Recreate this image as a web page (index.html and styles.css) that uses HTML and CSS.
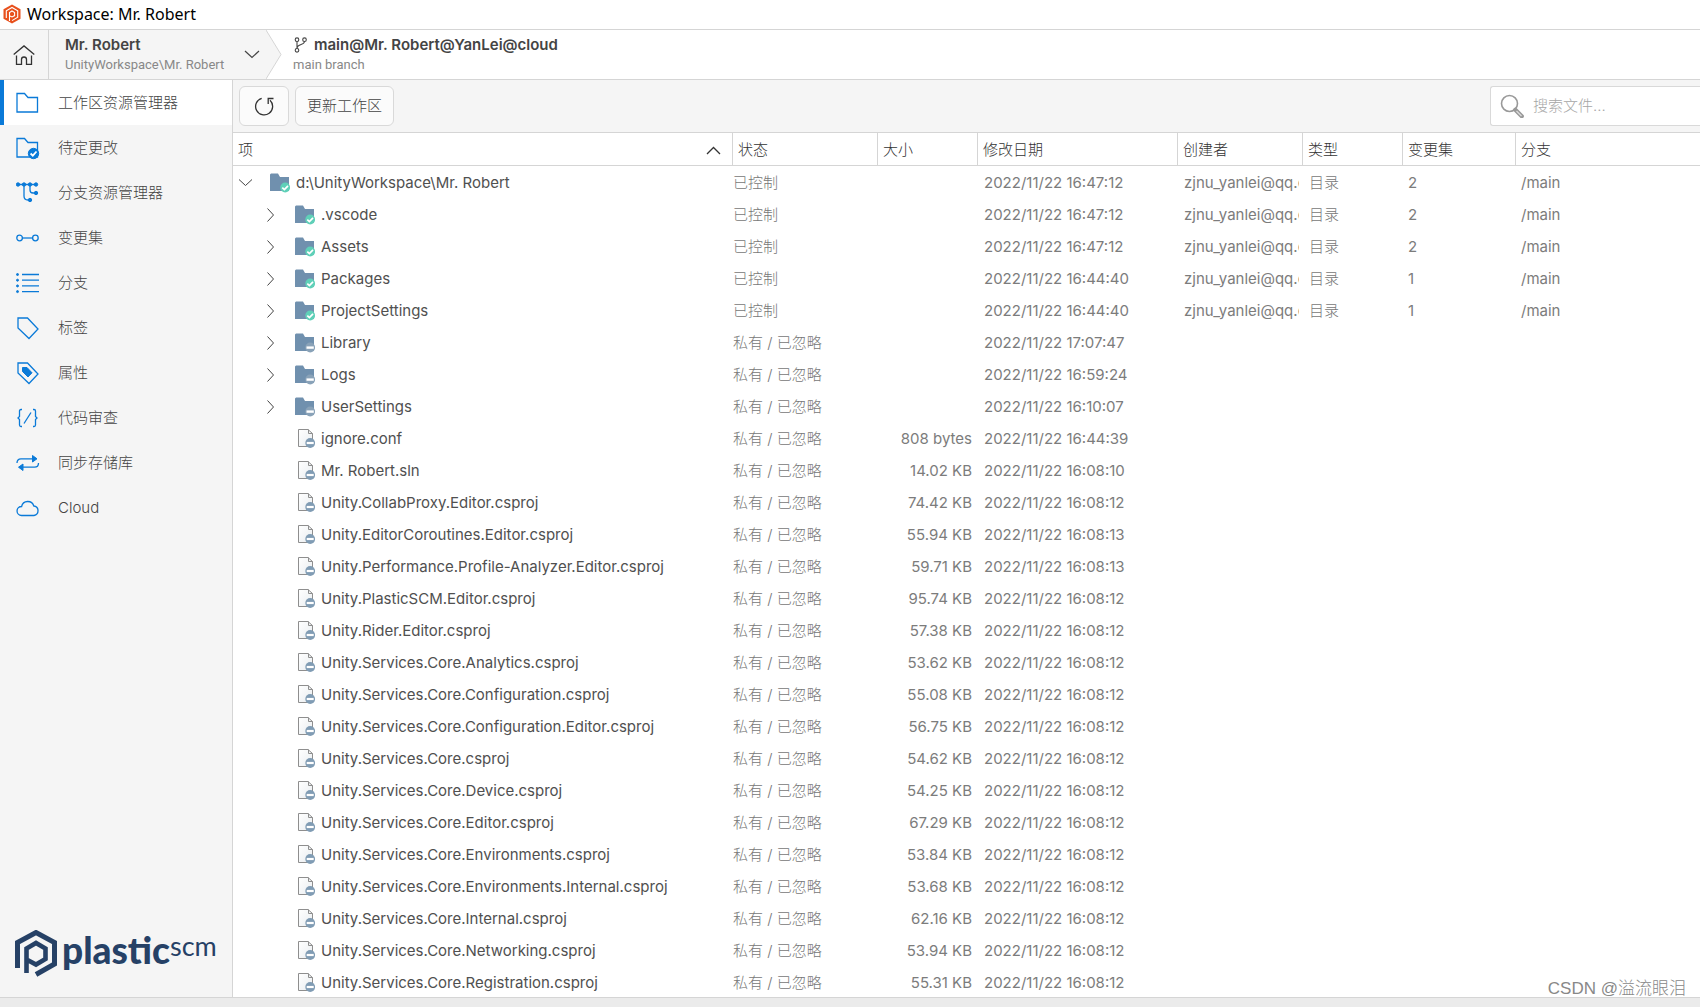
FILE: index.html
```html
<!DOCTYPE html>
<html lang="zh-CN">
<head>
<meta charset="utf-8">
<title>Workspace: Mr. Robert</title>
<link rel="stylesheet" href="styles.css">
</head>
<body>
<svg class="sprite" aria-hidden="true">
  <linearGradient id="paper" x1="0" y1="0" x2="1" y2="1"><stop offset="0" stop-color="#fff"/><stop offset="1" stop-color="#e9edf0"/></linearGradient>
  <symbol id="folder" viewBox="0 0 20 20"><path d="M0 1.5 1 .5H8L10 4H19V18H0Z" fill="#7090ae"/></symbol>
  <symbol id="folder-ok" viewBox="0 0 20 20"><use href="#folder"/><circle cx="15.2" cy="14.5" r="4.9" fill="#5fd0b8"/><path d="M12.3 14.6 14.4 16.6 18 12.8" fill="none" stroke="#fff" stroke-width="1.7"/></symbol>
  <symbol id="folder-ign" viewBox="0 0 20 20"><use href="#folder"/><circle cx="15.2" cy="14.5" r="4.9" fill="#89a2b8"/><path d="M11.5 14.6H18.8" stroke="#fff" stroke-width="2.4"/></symbol>
  <symbol id="file" viewBox="0 0 20 20"><path d="M3.5 .5H13L17.5 4.500V17.500H3.500Z" fill="url(#paper)" stroke="#8e8e8e"/><path d="M13.500 .5V4.500H17.500" fill="none" stroke="#8e8e8e"/><circle cx="15.200" cy="14" r="4.900" fill="#809cb4"/><path d="M11.700 14H18.700" stroke="#fff" stroke-width="2.200"/></symbol>
  <symbol id="right" viewBox="0 0 13 14"><path d="M3.5 .5 9.5 7 3.5 13.5" fill="none" stroke="#444"/></symbol>
  <symbol id="down" viewBox="0 0 13 14"><path d="M0 3.500 6.500 9.500 13 3.500" fill="none" stroke="#444"/></symbol>
</svg>

<header class="titlebar">
  <svg class="app-icon" viewBox="0 0 18 20"><path d="M9 .5 17.500 5.300V14.700L9 19.500 .5 14.700V5.300Z" fill="#e8501c"/><path d="M3.300 14V6.700L9 3.400 14.700 6.700V13.200L9 16.600" fill="none" stroke="#fff" stroke-width="1.100"/><path d="M6.500 17V8.600L9 7 11.600 8.500V11.600L9 13 7 12" fill="none" stroke="#fff" stroke-width="1.100"/></svg>
  <span>Workspace: Mr. Robert</span>
</header>

<div class="crumbs">
  <button class="home" aria-label="Home"><svg viewBox="0 0 22 20" width="22" height="20"><path d="M.7 9.500 11 .9 21.300 9.500M3.500 10.500V19.300H8.500V14.500A2.500 2.500 0 0 1 13.500 14.500V19.300H18.500V10.500" fill="none" stroke="#333" stroke-width="1.300"/></svg></button>
  <button class="workspace">
    <span class="crumb-text"><strong>Mr. Robert</strong><small>UnityWorkspace\Mr. Robert</small></span>
    <svg viewBox="0 0 16 9" width="16" height="9"><path d="M1 1 8 7.500 15 1" fill="none" stroke="#444" stroke-width="1.200"/></svg>
  </button>
  <svg class="arrow" viewBox="0 0 16 49" width="16" height="49"><path d="M0 0 15 24.500 0 49" fill="#f5f5f5" stroke="#d5d5d5"/></svg>
  <div class="crumb-text branch">
    <strong><svg viewBox="0 0 14 16" width="14" height="16"><g fill="none" stroke="#444" stroke-width="1.100"><circle cx="4" cy="2.700" r="1.800"/><circle cx="11.500" cy="2.700" r="1.800"/><circle cx="4" cy="13.300" r="1.800"/><path d="M4 4.500V11.500M11.500 4.500C11.300 8.500 4.800 6.500 4 11"/></g></svg>main@Mr. Robert@YanLei@cloud</strong>
    <small>main branch</small>
  </div>
</div>

<div class="body">
  <aside class="side">
    <nav>
      <a class="active" href="#"><svg viewBox="0 0 24 24"><path d="M1 3V21H21.500V6.500H12L8.500 2.500H1Z"/></svg>工作区资源管理器</a>
      <a href="#"><svg viewBox="0 0 24 24"><path d="M1 3V21H21.500V6.500H12L8.500 2.500H1Z"/><circle class="solid" cx="17.500" cy="17.500" r="5.200"/><path class="tick" d="M14.600 17.500 16.800 19.600 20.500 15.500"/></svg>待定更改</a>
      <a href="#"><svg viewBox="0 0 24 24"><path d="M2 3.500H20M8 3.500V15Q8 19 12 19H14M14 3.500V9Q14 12 17 12H20"/><g class="solid"><circle cx="2" cy="3.500" r="1.700"/><circle cx="8" cy="3.500" r="1.700"/><circle cx="14" cy="3.500" r="1.700"/><circle cx="20" cy="3.500" r="1.700"/><circle cx="20" cy="12" r="1.700"/><circle cx="14" cy="19" r="1.700"/></g></svg>分支资源管理器</a>
      <a href="#"><svg viewBox="0 0 24 24"><circle cx="3.600" cy="12" r="2.800"/><circle cx="19.400" cy="12" r="2.800"/><path d="M6.400 12H16.600"/></svg>变更集</a>
      <a href="#"><svg viewBox="0 0 24 24"><path d="M6 3.500H23M6 9.200H23M6 14.900H23M6 20.600H23"/><g class="solid"><circle cx="1.500" cy="3.500" r="1"/><circle cx="1.500" cy="9.200" r="1"/><circle cx="1.500" cy="14.900" r="1"/><circle cx="1.500" cy="20.600" r="1"/></g></svg>分支</a>
      <a href="#"><svg viewBox="0 0 24 24"><path d="M2 2H11.500L22 13 13 22.500 2 12Z"/></svg>标签</a>
      <a href="#"><svg viewBox="0 0 24 24"><path d="M2 2H11.500L22 13 13 22.500 2 12Z"/><path class="solid" d="M6.500 6.500H11L16 11.800 12 16 6.500 10.500Z"/></svg>属性</a>
      <a href="#"><svg viewBox="0 0 24 24"><path d="M6 3.500H5Q3.500 3.500 3.500 5V10.500L2 12 3.500 13.500V19Q3.500 20.500 5 20.500H6M17 3.500H18Q19.500 3.500 19.500 5V10.500L21 12 19.500 13.500V19Q19.500 20.500 18 20.500H17M15 6.500 8 17.500"/></svg>代码审查</a>
      <a href="#"><svg viewBox="0 0 24 24"><path d="M1 12Q1 7.800 5 7.800H18M22.500 12Q22.500 16.200 18.500 16.200H5"/><path class="solid" d="M16.500 4.500 21 7.800 16.500 11ZM7 13 2.500 16.200 7 19.500Z"/></svg>同步存储库</a>
      <a href="#"><svg viewBox="0 0 24 24"><path d="M5.500 19.500A4.400 4.400 0 0 1 5.600 10.500 6.300 6.300 0 0 1 17.800 10 4.800 4.800 0 0 1 18 19.500Z"/></svg>Cloud</a>
    </nav>
    <div class="logo"><svg viewBox="0 0 42 47" width="42" height="47"><path d="M2.500 38V12.500L21 2.500 39.500 12.500V34L21 44.500" fill="none" stroke="currentColor" stroke-width="5"/><path d="M11.500 43V18.500L21 13 30.500 18.500V29L21 34.500 12.500 30" fill="none" stroke="currentColor" stroke-width="4.600"/></svg><span class="word">plastic</span><span class="scm">scm</span></div>
  </aside>

  <main>
    <div class="toolbar">
      <button class="refresh" aria-label="刷新"><svg viewBox="0 0 20 20" width="20" height="20"><path d="M7.700 2.300A8.500 8.500 0 1 0 16 4.300" fill="none" stroke="#333" stroke-width="1.300"/><path d="M14.200 8V2.500H19.500" fill="none" stroke="#333" stroke-width="1.300"/></svg></button>
      <button>更新工作区</button>
      <label class="search"><svg viewBox="0 0 24 24" width="24" height="24"><g fill="none" stroke="#999"><circle cx="9.500" cy="9.500" r="8" stroke-width="1.600"/><path d="M15.300 15.800 21.800 22.200" stroke-width="4.200" stroke-linecap="round"/><path d="M16.500 17 21.500 22" stroke="#ddd" stroke-width="1.300"/></g></svg><input type="text" placeholder="搜索文件..." aria-label="搜索文件"></label>
    </div>
    <div class="list">
    <table>
      <colgroup><col class="c-item"><col class="c-status"><col class="c-size"><col class="c-date"><col class="c-owner"><col class="c-type"><col class="c-cs"><col></colgroup>
      <thead><tr><th><div class="sorted">项<svg viewBox="0 0 15 9" width="15" height="9"><path d="M1 8 7.500 1.500 14 8" fill="none" stroke="#333" stroke-width="1.300"/></svg></div></th><th>状态</th><th>大小</th><th>修改日期</th><th>创建者</th><th>类型</th><th>变更集</th><th>分支</th></tr></thead>
      <tbody>
      <tr><td><div class="item root"><button aria-label="折叠"><svg><use href="#down"/></svg></button><svg class="ico"><use href="#folder-ok"/></svg>d:\UnityWorkspace\Mr. Robert</div></td><td>已控制</td><td></td><td>2022/11/22 16:47:12</td><td><div class="clip">zjnu_yanlei@qq.com</div></td><td>目录</td><td>2</td><td>/main</td></tr>
      <tr><td><div class="item"><button aria-label="展开"><svg><use href="#right"/></svg></button><svg class="ico"><use href="#folder-ok"/></svg>.vscode</div></td><td>已控制</td><td></td><td>2022/11/22 16:47:12</td><td><div class="clip">zjnu_yanlei@qq.com</div></td><td>目录</td><td>2</td><td>/main</td></tr>
      <tr><td><div class="item"><button aria-label="展开"><svg><use href="#right"/></svg></button><svg class="ico"><use href="#folder-ok"/></svg>Assets</div></td><td>已控制</td><td></td><td>2022/11/22 16:47:12</td><td><div class="clip">zjnu_yanlei@qq.com</div></td><td>目录</td><td>2</td><td>/main</td></tr>
      <tr><td><div class="item"><button aria-label="展开"><svg><use href="#right"/></svg></button><svg class="ico"><use href="#folder-ok"/></svg>Packages</div></td><td>已控制</td><td></td><td>2022/11/22 16:44:40</td><td><div class="clip">zjnu_yanlei@qq.com</div></td><td>目录</td><td>1</td><td>/main</td></tr>
      <tr><td><div class="item"><button aria-label="展开"><svg><use href="#right"/></svg></button><svg class="ico"><use href="#folder-ok"/></svg>ProjectSettings</div></td><td>已控制</td><td></td><td>2022/11/22 16:44:40</td><td><div class="clip">zjnu_yanlei@qq.com</div></td><td>目录</td><td>1</td><td>/main</td></tr>
      <tr><td><div class="item"><button aria-label="展开"><svg><use href="#right"/></svg></button><svg class="ico"><use href="#folder-ign"/></svg>Library</div></td><td>私有 / 已忽略</td><td></td><td>2022/11/22 17:07:47</td><td></td><td></td><td></td><td></td></tr>
      <tr><td><div class="item"><button aria-label="展开"><svg><use href="#right"/></svg></button><svg class="ico"><use href="#folder-ign"/></svg>Logs</div></td><td>私有 / 已忽略</td><td></td><td>2022/11/22 16:59:24</td><td></td><td></td><td></td><td></td></tr>
      <tr><td><div class="item"><button aria-label="展开"><svg><use href="#right"/></svg></button><svg class="ico"><use href="#folder-ign"/></svg>UserSettings</div></td><td>私有 / 已忽略</td><td></td><td>2022/11/22 16:10:07</td><td></td><td></td><td></td><td></td></tr>
      <tr><td><div class="item leaf"><svg class="ico"><use href="#file"/></svg>ignore.conf</div></td><td>私有 / 已忽略</td><td>808 bytes</td><td>2022/11/22 16:44:39</td><td></td><td></td><td></td><td></td></tr>
      <tr><td><div class="item leaf"><svg class="ico"><use href="#file"/></svg>Mr. Robert.sln</div></td><td>私有 / 已忽略</td><td>14.02 KB</td><td>2022/11/22 16:08:10</td><td></td><td></td><td></td><td></td></tr>
      <tr><td><div class="item leaf"><svg class="ico"><use href="#file"/></svg>Unity.CollabProxy.Editor.csproj</div></td><td>私有 / 已忽略</td><td>74.42 KB</td><td>2022/11/22 16:08:12</td><td></td><td></td><td></td><td></td></tr>
      <tr><td><div class="item leaf"><svg class="ico"><use href="#file"/></svg>Unity.EditorCoroutines.Editor.csproj</div></td><td>私有 / 已忽略</td><td>55.94 KB</td><td>2022/11/22 16:08:13</td><td></td><td></td><td></td><td></td></tr>
      <tr><td><div class="item leaf"><svg class="ico"><use href="#file"/></svg>Unity.Performance.Profile-Analyzer.Editor.csproj</div></td><td>私有 / 已忽略</td><td>59.71 KB</td><td>2022/11/22 16:08:13</td><td></td><td></td><td></td><td></td></tr>
      <tr><td><div class="item leaf"><svg class="ico"><use href="#file"/></svg>Unity.PlasticSCM.Editor.csproj</div></td><td>私有 / 已忽略</td><td>95.74 KB</td><td>2022/11/22 16:08:12</td><td></td><td></td><td></td><td></td></tr>
      <tr><td><div class="item leaf"><svg class="ico"><use href="#file"/></svg>Unity.Rider.Editor.csproj</div></td><td>私有 / 已忽略</td><td>57.38 KB</td><td>2022/11/22 16:08:12</td><td></td><td></td><td></td><td></td></tr>
      <tr><td><div class="item leaf"><svg class="ico"><use href="#file"/></svg>Unity.Services.Core.Analytics.csproj</div></td><td>私有 / 已忽略</td><td>53.62 KB</td><td>2022/11/22 16:08:12</td><td></td><td></td><td></td><td></td></tr>
      <tr><td><div class="item leaf"><svg class="ico"><use href="#file"/></svg>Unity.Services.Core.Configuration.csproj</div></td><td>私有 / 已忽略</td><td>55.08 KB</td><td>2022/11/22 16:08:12</td><td></td><td></td><td></td><td></td></tr>
      <tr><td><div class="item leaf"><svg class="ico"><use href="#file"/></svg>Unity.Services.Core.Configuration.Editor.csproj</div></td><td>私有 / 已忽略</td><td>56.75 KB</td><td>2022/11/22 16:08:12</td><td></td><td></td><td></td><td></td></tr>
      <tr><td><div class="item leaf"><svg class="ico"><use href="#file"/></svg>Unity.Services.Core.csproj</div></td><td>私有 / 已忽略</td><td>54.62 KB</td><td>2022/11/22 16:08:12</td><td></td><td></td><td></td><td></td></tr>
      <tr><td><div class="item leaf"><svg class="ico"><use href="#file"/></svg>Unity.Services.Core.Device.csproj</div></td><td>私有 / 已忽略</td><td>54.25 KB</td><td>2022/11/22 16:08:12</td><td></td><td></td><td></td><td></td></tr>
      <tr><td><div class="item leaf"><svg class="ico"><use href="#file"/></svg>Unity.Services.Core.Editor.csproj</div></td><td>私有 / 已忽略</td><td>67.29 KB</td><td>2022/11/22 16:08:12</td><td></td><td></td><td></td><td></td></tr>
      <tr><td><div class="item leaf"><svg class="ico"><use href="#file"/></svg>Unity.Services.Core.Environments.csproj</div></td><td>私有 / 已忽略</td><td>53.84 KB</td><td>2022/11/22 16:08:12</td><td></td><td></td><td></td><td></td></tr>
      <tr><td><div class="item leaf"><svg class="ico"><use href="#file"/></svg>Unity.Services.Core.Environments.Internal.csproj</div></td><td>私有 / 已忽略</td><td>53.68 KB</td><td>2022/11/22 16:08:12</td><td></td><td></td><td></td><td></td></tr>
      <tr><td><div class="item leaf"><svg class="ico"><use href="#file"/></svg>Unity.Services.Core.Internal.csproj</div></td><td>私有 / 已忽略</td><td>62.16 KB</td><td>2022/11/22 16:08:12</td><td></td><td></td><td></td><td></td></tr>
      <tr><td><div class="item leaf"><svg class="ico"><use href="#file"/></svg>Unity.Services.Core.Networking.csproj</div></td><td>私有 / 已忽略</td><td>53.94 KB</td><td>2022/11/22 16:08:12</td><td></td><td></td><td></td><td></td></tr>
      <tr><td><div class="item leaf"><svg class="ico"><use href="#file"/></svg>Unity.Services.Core.Registration.csproj</div></td><td>私有 / 已忽略</td><td>55.31 KB</td><td>2022/11/22 16:08:12</td><td></td><td></td><td></td><td></td></tr>
      </tbody>
    </table>
    </div>
  </main>
</div>
<footer class="status"></footer>
<div class="watermark">CSDN @溢流眼泪</div>
</body>
</html>
```
FILE: styles.css
```css
* { box-sizing: border-box; }
body {
  margin: 0;
  height: 100vh;
  display: flex;
  flex-direction: column;
  overflow: hidden;
  position: relative;
  background: #fff;
  color: #444;
  font: 300 15px/20px Inter, "Noto Sans CJK SC", sans-serif;
}
button, input { font: inherit; color: inherit; }
button { border: 0; padding: 0; background: none; }
svg { display: block; flex: none; }
.sprite { position: absolute; width: 0; height: 0; }

.titlebar {
  display: flex;
  align-items: center;
  gap: 6px;
  height: 30px;
  padding: 0 3px 1px;
  border-bottom: 1px solid #d5d5d5;
  color: #000;
  font: 400 16px/20px "Noto Sans", sans-serif;
}
.app-icon { width: 18px; height: 20px; }

.crumbs { display: flex; height: 50px; border-bottom: 1px solid #d5d5d5; }
.home {
  display: grid;
  place-items: center;
  width: 49px;
  border-right: 1px solid #d5d5d5;
  background: #f5f5f5;
}
.workspace {
  display: flex;
  align-items: center;
  justify-content: space-between;
  width: 217px;
  padding: 0 6px 0 16px;
  background: #f5f5f5;
  text-align: left;
}
.crumb-text { display: flex; flex-direction: column; justify-content: center; }
.crumb-text strong { display: flex; align-items: center; gap: 7px; font-weight: 600; font-size: 15px; line-height: 20px; }
.crumb-text small { font: 400 13px/19px Roboto, sans-serif; color: #888; }
.branch { padding-left: 11px; }

.body { flex: 1; min-height: 0; display: flex; }
.side {
  display: flex;
  flex-direction: column;
  justify-content: space-between;
  width: 233px;
  border-right: 1px solid #d5d5d5;
  background: #f5f5f5;
}
.side nav a {
  display: flex;
  align-items: center;
  gap: 18px;
  height: 45px;
  padding-left: 16px;
  color: #444;
  text-decoration: none;
}
.side nav a.active { padding-left: 12px; border-left: 4px solid #0a7ad8; background: #fff; }
.side nav svg { width: 24px; height: 24px; fill: none; stroke: #0a7ad8; stroke-width: 1.3; }
.side nav .solid { fill: #0a7ad8; stroke: #0a7ad8; stroke-width: 1; }
.side nav .tick { stroke: #fff; stroke-width: 1.8; }
.logo { display: flex; align-items: flex-start; padding: 0 0 20px 15px; color: #264166; font-family: Lato, sans-serif; }
.logo .word { padding-left: 5px; font-size: 37px; font-weight: 900; line-height: 40px; }
.logo .scm { font-size: 27px; font-weight: 400; line-height: 32px; }

main { flex: 1; min-width: 0; display: flex; flex-direction: column; }
.toolbar { display: flex; gap: 6px; height: 53px; padding: 6px 0 6px 6px; background: #f5f5f5; border-bottom: 1px solid #d5d5d5; }
.toolbar button { height: 40px; padding: 0 11px; border: 1px solid #d9d9d9; border-radius: 6px; background: #fbfbfb; }
.toolbar .refresh { display: grid; place-items: center; width: 50px; }
.search {
  display: flex;
  align-items: center;
  gap: 9px;
  width: 210px;
  height: 40px;
  margin-left: auto;
  padding-left: 9px;
  border: 1px solid #d9d9d9;
  border-right: 0;
  border-radius: 3px 0 0 3px;
  background: #fff;
}
.search input { flex: 1; min-width: 0; border: 0; padding: 0; outline: 0; background: none; }
.search input::placeholder { color: #a5a5a5; opacity: 1; }

.list { flex: 1; min-height: 0; overflow: hidden; }
table { width: 100%; table-layout: fixed; border-collapse: separate; border-spacing: 0; }
.c-item { width: 500px; }
.c-status { width: 145px; }
.c-size, .c-type { width: 100px; }
.c-date { width: 200px; }
.c-owner { width: 125px; }
.c-cs { width: 113px; }
th {
  height: 33px;
  padding: 2px 5px 0;
  border-right: 1px solid #d5d5d5;
  border-bottom: 1px solid #d5d5d5;
  font-weight: 300;
  text-align: left;
  color: #333;
}
th:last-child { border-right: 0; }
.sorted { display: flex; align-items: center; justify-content: space-between; padding-right: 6px; }
td { height: 32px; padding: 2px 6px 0; color: #7c7c7c; white-space: nowrap; font-weight: 400; }
td:nth-child(2) { padding-left: 0; color: #777; font-weight: 300; }
td:nth-child(3) { text-align: right; }
td:nth-child(5) { padding-right: 4px; }
td:nth-child(6) { color: #777; font-weight: 300; }
td:nth-child(n+7) { padding-left: 5px; }
td:first-child { color: #505050; }
.item { display: flex; align-items: center; padding-left: 25px; }
.item.root { padding-left: 0; }
.item.leaf { padding-left: 56px; }
.item button { margin-right: 18px; }
.item button svg { width: 13px; height: 14px; }
.ico { width: 20px; height: 20px; margin-right: 6px; }
.clip { overflow: hidden; }

.status { height: 10px; background: #ebebeb; border-top: 1px solid #d5d5d5; }
.watermark { position: absolute; right: 14px; bottom: 6px; color: #888; font: 300 17px/24px "Liberation Sans", "Noto Sans CJK SC", sans-serif; }
```
